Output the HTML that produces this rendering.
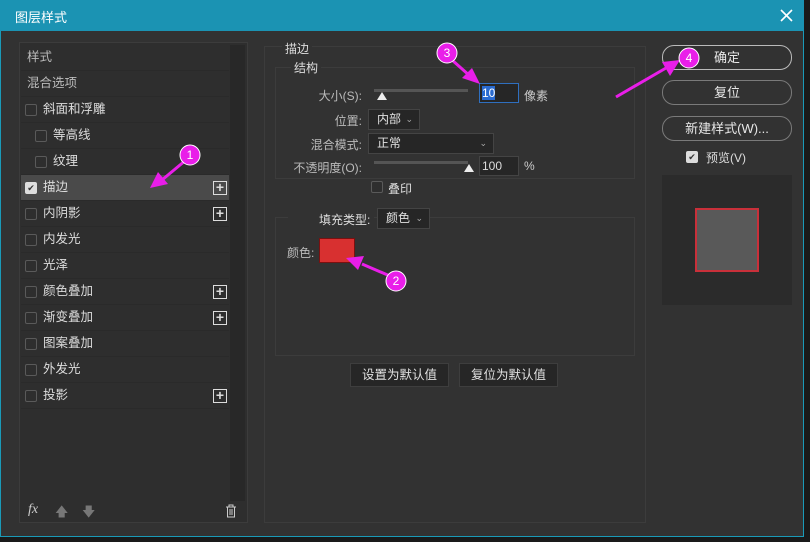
<!DOCTYPE html>
<html><head><meta charset="utf-8"><style>
*{margin:0;padding:0;box-sizing:border-box}
body{width:810px;height:542px;background:#1a1a1a;font-family:"Liberation Sans","Noto Sans CJK SC",sans-serif;font-size:12px;color:#d6d6d6;position:relative;overflow:hidden}
.a{position:absolute}
.dlg{left:0;top:0;width:804px;height:537px;background:#323232;border:1px solid #1a9ab8;border-top:none}
.title{left:0;top:0;width:804px;height:31px;background:#1b93b3;color:#fff;font-size:13px;padding:7px 0 0 15px}
.row{position:absolute;left:21px;width:208px;height:26px;border-bottom:1px solid #2a2a2a;line-height:25px;color:#ddd;font-size:12.5px}
.cb{position:absolute;width:12px;height:12px;border:1px solid #5a5a5a;border-radius:2px;background:#2e2e2e}
.plus{position:absolute;right:2px;top:6px;width:14px;height:14px;border:1px solid #ddd;color:#ddd;font-size:14px;line-height:11px;text-align:center;font-weight:bold}
.btn{position:absolute;border:1px solid #7a7a7a;border-radius:12px;text-align:center;color:#e8e8e8;font-size:13px;line-height:23px;height:25px}
.sel{position:absolute;background:#262626;border:1px solid #444;height:21px;line-height:19px;padding-left:8px;color:#e0e0e0}
.sel i{position:absolute;right:6px;top:0;font-style:normal;font-size:9px;color:#aaa}
.lbl{position:absolute;color:#bbb;text-align:right}
.gbtn{position:absolute;background:#262626;border:1px solid #3e3e3e;height:24px;line-height:22px;text-align:center;color:#e0e0e0;font-size:12.5px}
</style></head><body>
<div class="a dlg"></div>
<div class="a title">图层样式</div>
<svg class="a" style="left:780px;top:9px" width="13" height="13"><path d="M1 1L12 12M12 1L1 12" stroke="#fff" stroke-width="1.6"/></svg>

<!-- left panel -->
<div class="a" style="left:19px;top:42px;width:229px;height:481px;background:#2e2e2e;border:1px solid #3c3c3c"></div>
<div class="a" style="left:230px;top:45px;width:15px;height:456px;background:#282828"></div>
<div class="row" style="top:45px;padding-left:6px;color:#bbb">样式</div>
<div class="row" style="top:71px;padding-left:6px;color:#bbb">混合选项</div>
<div class="row" style="top:97px;padding-left:22px">斜面和浮雕<span class="cb" style="left:4px;top:7px"></span></div>
<div class="row" style="top:123px;padding-left:32px">等高线<span class="cb" style="left:14px;top:7px"></span></div>
<div class="row" style="top:149px;padding-left:32px">纹理<span class="cb" style="left:14px;top:7px"></span></div>
<div class="row" style="top:175px;padding-left:22px;background:#4a4a4a">描边<span class="cb" style="left:4px;top:7px;background:#ddd;border-color:#ddd;color:#333;font-size:9px;line-height:10px;text-align:center">✔</span><span class="plus">+</span></div>
<div class="row" style="top:201px;padding-left:22px">内阴影<span class="cb" style="left:4px;top:7px"></span><span class="plus">+</span></div>
<div class="row" style="top:227px;padding-left:22px">内发光<span class="cb" style="left:4px;top:7px"></span></div>
<div class="row" style="top:253px;padding-left:22px">光泽<span class="cb" style="left:4px;top:7px"></span></div>
<div class="row" style="top:279px;padding-left:22px">颜色叠加<span class="cb" style="left:4px;top:7px"></span><span class="plus">+</span></div>
<div class="row" style="top:305px;padding-left:22px">渐变叠加<span class="cb" style="left:4px;top:7px"></span><span class="plus">+</span></div>
<div class="row" style="top:331px;padding-left:22px">图案叠加<span class="cb" style="left:4px;top:7px"></span></div>
<div class="row" style="top:357px;padding-left:22px">外发光<span class="cb" style="left:4px;top:7px"></span></div>
<div class="row" style="top:383px;padding-left:22px">投影<span class="cb" style="left:4px;top:7px"></span><span class="plus">+</span></div>
<div class="a" style="left:28px;top:502px;color:#ccc;font-style:italic;font-size:14px;font-family:'Liberation Serif',serif">fx</div>
<div class="a" style="left:55px;top:503px;color:#777;font-size:13px">🡅</div>
<div class="a" style="left:82px;top:503px;color:#777;font-size:13px">🡇</div>
<svg class="a" style="left:225px;top:504px" width="12" height="14" viewBox="0 0 12 14"><path d="M1 3h10M4 3V1h4v2M2.5 3v10h7V3M5 5v6M7 5v6" stroke="#ccc" fill="none"/></svg>

<!-- middle panel -->
<div class="a" style="left:264px;top:46px;width:382px;height:477px;border:1px solid #3c3c3c"></div>
<div class="a" style="left:282px;top:40px;background:#323232;padding:0 3px;color:#ddd">描边</div>
<div class="a" style="left:275px;top:67px;width:360px;height:112px;border:1px solid #3c3c3c"></div>
<div class="a" style="left:291px;top:59px;background:#323232;padding:0 3px;color:#ddd">结构</div>
<div class="lbl" style="left:290px;top:87px;width:72px">大小(S):</div>
<div class="a" style="left:374px;top:89px;width:94px;height:3px;background:#555"></div>
<div class="a" style="left:377px;top:92px;width:0;height:0;border-left:5px solid transparent;border-right:5px solid transparent;border-bottom:8px solid #eee"></div>
<div class="a" style="left:479px;top:83px;width:40px;height:20px;background:#262626;border:1px solid #2f6fbf"><span style="background:#2a6bd0;color:#fff;margin:2px 0 0 2px;display:inline-block;line-height:14px">10</span></div>
<div class="a" style="left:524px;top:87px;color:#ccc">像素</div>
<div class="lbl" style="left:290px;top:112px;width:72px">位置:</div>
<div class="sel" style="left:368px;top:109px;width:52px">内部<i>⌄</i></div>
<div class="lbl" style="left:290px;top:136px;width:72px">混合模式:</div>
<div class="sel" style="left:368px;top:133px;width:126px">正常<i>⌄</i></div>
<div class="lbl" style="left:280px;top:159px;width:82px">不透明度(O):</div>
<div class="a" style="left:374px;top:161px;width:94px;height:3px;background:#555"></div>
<div class="a" style="left:464px;top:164px;width:0;height:0;border-left:5px solid transparent;border-right:5px solid transparent;border-bottom:8px solid #eee"></div>
<div class="a" style="left:479px;top:156px;width:40px;height:20px;background:#262626;border:1px solid #444;padding:2px 0 0 2px;color:#ddd">100</div>
<div class="a" style="left:524px;top:159px;color:#ccc">%</div>
<span class="cb" style="left:371px;top:181px"></span>
<div class="a" style="left:388px;top:180px;color:#ddd">叠印</div>

<div class="a" style="left:275px;top:217px;width:360px;height:139px;border:1px solid #3c3c3c"></div>
<div class="a" style="left:288px;top:210px;width:86px;height:16px;background:#323232"></div>
<div class="a" style="left:319px;top:211px;color:#ddd">填充类型:</div>
<div class="sel" style="left:377px;top:208px;width:53px">颜色<i>⌄</i></div>
<div class="a" style="left:287px;top:244px;color:#bbb">颜色:</div>
<div class="a" style="left:319px;top:238px;width:36px;height:25px;background:#d83030;border:1px solid #7a1010"></div>
<div class="gbtn" style="left:350px;top:363px;width:99px">设置为默认值</div>
<div class="gbtn" style="left:459px;top:363px;width:99px">复位为默认值</div>

<!-- right -->
<div class="btn" style="left:662px;top:45px;width:130px;border-color:#bbb">确定</div>
<div class="btn" style="left:662px;top:80px;width:130px">复位</div>
<div class="btn" style="left:662px;top:116px;width:130px">新建样式(W)...</div>
<span class="cb" style="left:686px;top:151px;background:#ddd;border-color:#ddd;color:#333;font-size:9px;line-height:10px;text-align:center">✔</span>
<div class="a" style="left:706px;top:149px;color:#ddd">预览(V)</div>
<div class="a" style="left:662px;top:175px;width:130px;height:130px;background:#2b2b2b"></div>
<div class="a" style="left:695px;top:208px;width:64px;height:64px;background:#595959;border:2px solid #c9303a"></div>

<!-- annotations -->
<svg class="a" style="left:0;top:0" width="810" height="542">
<g fill="#e91ee9" stroke="#e91ee9">
<line x1="186" y1="160" x2="162" y2="180" stroke-width="3"/><polygon points="150,188 158,172 168,184" stroke="none"/>
<line x1="390" y1="276" x2="362" y2="264" stroke-width="3"/><polygon points="346,258 364,256 358,270" stroke="none"/>
<line x1="452" y1="60" x2="470" y2="76" stroke-width="3"/><polygon points="480,84 462,78 472,68" stroke="none"/>
<line x1="616" y1="97" x2="666" y2="68" stroke-width="3"/><polygon points="680,60 670,76 662,62" stroke="none"/>
<circle cx="190" cy="155" r="10" stroke="#fff" stroke-width="1"/>
<circle cx="396" cy="281" r="10" stroke="#fff" stroke-width="1"/>
<circle cx="447" cy="53" r="10" stroke="#fff" stroke-width="1"/>
<circle cx="689" cy="58" r="10" stroke="#fff" stroke-width="1"/>
</g>
<g fill="#fff" font-family="Liberation Sans" font-size="12" text-anchor="middle">
<text x="190" y="159">1</text><text x="396" y="285">2</text><text x="447" y="57">3</text><text x="689" y="62">4</text>
</g>
</svg>
</body></html>
